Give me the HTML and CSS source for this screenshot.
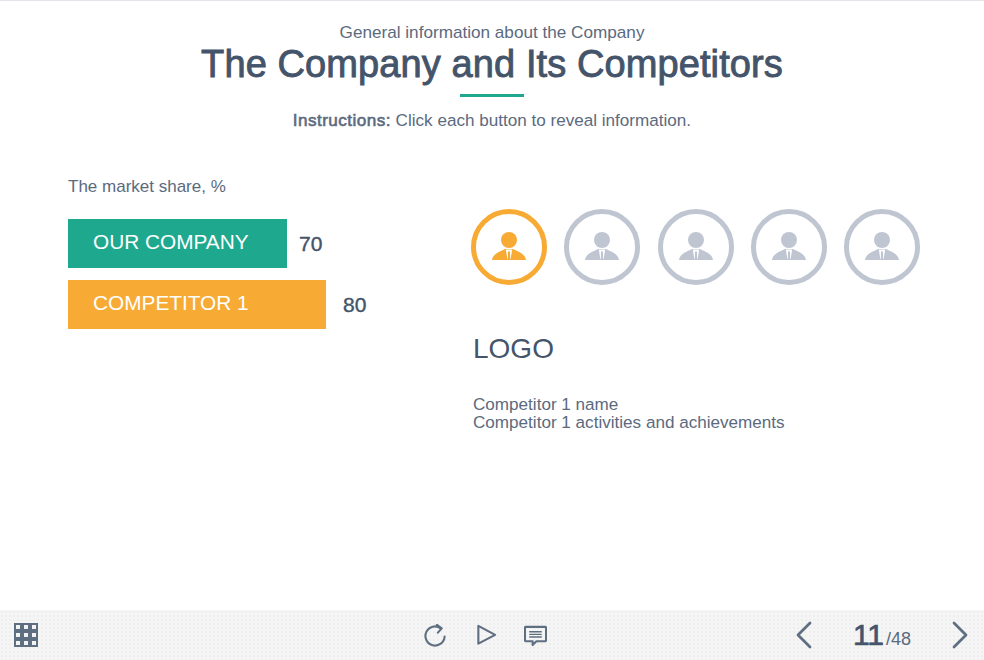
FILE: index.html
```html
<!DOCTYPE html>
<html lang="en">
<head>
  <meta charset="UTF-8" />
  <title>The Company and Its Competitors</title>
  <link rel="stylesheet" href="styles.css">
</head>
<body>
  <div class="slide">
    <header class="slide-head">
      <p class="subtitle">General information about the Company</p>
      <h1>The Company and Its Competitors</h1>
      <div class="rule"></div>
      <p class="instructions"><b>Instructions:</b> Click each button to reveal information.</p>
    </header>

    <main class="content">
      <!-- Market share bars -->
      <section class="share">
        <p class="share-title">The market share, %</p>
        <div class="bar-row">
          <div class="bar bar-green">OUR COMPANY</div>
          <span class="bar-value">70</span>
        </div>
        <div class="bar-row">
          <div class="bar bar-orange">COMPETITOR 1</div>
          <span class="bar-value value-wide">80</span>
        </div>
      </section>

      <!-- Competitor buttons -->
      <section class="details">
        <div class="people">
          <button class="person active"><svg viewBox="0 0 34 28"><use href="#man"/></svg></button>
          <button class="person"><svg viewBox="0 0 34 28"><use href="#man"/></svg></button>
          <button class="person"><svg viewBox="0 0 34 28"><use href="#man"/></svg></button>
          <button class="person"><svg viewBox="0 0 34 28"><use href="#man"/></svg></button>
          <button class="person"><svg viewBox="0 0 34 28"><use href="#man"/></svg></button>
        </div>
        <h2 class="logo">LOGO</h2>
        <p class="info">Competitor 1 name<br>Competitor 1 activities and achievements</p>
      </section>
    </main>

    <footer class="toolbar">
      <div class="tool-left">
        <svg class="icon-grid" viewBox="0 0 24 24"><use href="#grid"/></svg>
      </div>
      <div class="tool-mid">
        <svg class="icon icon-reload" viewBox="0 0 24 24">
          <path d="M17.5 4.5 A10 10 0 1 0 21.5 13"/>
          <path d="M13.5 1 L18.5 4.6 L14.5 9"/>
        </svg>
        <svg class="icon" viewBox="0 0 24 24"><path d="M3.5 2 V20.5 L21 11.3 Z"/></svg>
        <svg class="icon" viewBox="0 0 24 24">
          <path d="M2 3 H22 Q23 3 23 4 V17 Q23 18 22 18 H13 L9 22 V18 H2 Q1 18 1 17 V4 Q1 3 2 3 Z"/>
          <path d="M6 8 H18 M6 10.8 H18 M6 13.6 H18" class="thin"/>
        </svg>
      </div>
      <div class="tool-right">
        <svg class="arrow" viewBox="0 0 18 28"><path d="M15 2 L3 14 L15 26"/></svg>
        <div class="pager"><b>11</b>/48</div>
        <svg class="arrow" viewBox="0 0 18 28"><path d="M3 2 L15 14 L3 26"/></svg>
      </div>
    </footer>
  </div>

  <svg class="defs" width="0" height="0">
    <defs>
      <symbol id="man" viewBox="0 0 34 28">
        <circle cx="17" cy="8" r="8" fill="currentColor"/>
        <path d="M0 28 C1 22 6 20.5 13 17 H21 C28 20.5 33 22 34 28 Z" fill="currentColor"/>
        <path d="M13.8 17.6 H20.2 L18.6 27 H15.4 Z" fill="#fff"/>
        <path d="M16 19.5 H18 L18.2 28 H15.8 Z" fill="currentColor"/>
      </symbol>
      <symbol id="grid" viewBox="0 0 24 24">
        <g fill="none" stroke="#5f6f82" stroke-width="2">
          <rect x="1" y="1" width="6" height="6"/><rect x="9" y="1" width="6" height="6"/><rect x="17" y="1" width="6" height="6"/>
          <rect x="1" y="9" width="6" height="6"/><rect x="9" y="9" width="6" height="6"/><rect x="17" y="9" width="6" height="6"/>
          <rect x="1" y="17" width="6" height="6"/><rect x="9" y="17" width="6" height="6"/><rect x="17" y="17" width="6" height="6"/>
        </g>
      </symbol>
    </defs>
  </svg>
</body>
</html>
```

FILE: styles.css
```css
html, body {
  height: 100%;
  margin: 0;
  padding: 0;
  font-family: "Liberation Sans", Arial, sans-serif;
  color: #44546a;
  background-color: #fff;
}

.slide {
  display: flex;
  flex-direction: column;
  height: 660px;
  box-sizing: border-box;
  border-top: 1px solid #e3e6ea;
  overflow: hidden;
}

.slide-head {
  text-align: center;
  padding-top: 22px;
}

.subtitle {
  margin: 0;
  font-size: 17.15px;
  line-height: 18px;
  color: #5b6a7e;
}

h1 {
  margin: 1px 0 0;
  font-size: 38px;
  line-height: 44px;
  font-weight: normal;
  letter-spacing: 0.1px;
  color: #44546a;
  -webkit-text-stroke: 0.9px #44546a;
}

.rule {
  width: 64px;
  height: 3px;
  margin: 8px auto 0;
  background-color: #1ea98f;
}

.instructions {
  margin: 14px 0 0;
  font-size: 17.1px;
  line-height: 20px;
  color: #5b6a7e;
}

.instructions b {
  font-weight: normal;
  letter-spacing: 0.45px;
  -webkit-text-stroke: 0.6px #5b6a7e;
}

.content {
  display: flex;
  flex: 1;
  padding: 0 64px 0 68px;
}

.share {
  width: 403px;
  padding-top: 47px;
}

.share-title {
  margin: 0 0 23px;
  font-size: 17px;
  line-height: 18px;
  color: #5b6a7e;
}

.bar-row {
  display: flex;
  align-items: center;
  margin-bottom: 12px;
}

.bar {
  height: 49px;
  line-height: 45px;
  padding-left: 25px;
  box-sizing: border-box;
  font-size: 20.8px;
  color: #fff;
}

.bar-green {
  width: 219px;
  background-color: #1ea98f;
}

.bar-orange {
  width: 258px;
  background-color: #f7ab35;
}

.bar-value {
  margin-left: 12px;
  font-size: 21px;
  color: #44546a;
  -webkit-text-stroke: 0.4px #44546a;
}

.value-wide {
  margin-left: 17px;
}

.details {
  flex: 1;
  padding-top: 78px;
}

.people {
  display: flex;
  gap: 17.25px;
}

.person {
  display: flex;
  align-items: center;
  justify-content: center;
  width: 76px;
  height: 76px;
  padding: 0 0 2px;
  border: 5px solid #bfc6d1;
  border-radius: 50%;
  box-sizing: border-box;
  background: none;
  color: #bfc6d1;
  cursor: pointer;
}

.person.active {
  border-color: #f7ab35;
  color: #f7ab35;
}

.person svg {
  width: 34px;
  height: 28px;
}

.logo {
  margin: 47px 0 0 2px;
  font-size: 28px;
  line-height: 34px;
  font-weight: normal;
  color: #44546a;
}

.info {
  margin: 30px 0 0 2px;
  font-size: 17.1px;
  line-height: 17.5px;
  color: #5b6a7e;
}

.toolbar {
  display: grid;
  grid-template-columns: 1fr auto 1fr;
  align-items: center;
  height: 50px;
  flex-shrink: 0;
  background-color: #f5f5f5;
  background-image: radial-gradient(#eeeeee 0.7px, transparent 0.8px);
  background-size: 4px 4px;
}

.tool-left {
  padding-left: 14px;
  display: flex;
}

.icon-grid {
  width: 24px;
  height: 24px;
}

.tool-mid {
  display: flex;
  gap: 26px;
  align-items: center;
  padding-right: 14px;
}

.icon {
  width: 23px;
  height: 23px;
  fill: none;
  stroke: #5f6f82;
  stroke-width: 2.2;
  stroke-linejoin: round;
  stroke-linecap: round;
}

.icon-reload {
  margin-right: 2px;
}

.icon .thin {
  stroke-width: 1.5;
}

.tool-right {
  display: flex;
  justify-content: flex-end;
  align-items: center;
  padding-right: 15px;
}

.arrow {
  width: 18px;
  height: 28px;
  fill: none;
  stroke: #5f6f82;
  stroke-width: 2.8;
  stroke-linecap: round;
  stroke-linejoin: round;
}

.pager {
  width: 138px;
  text-align: center;
  font-size: 18px;
  color: #5b6a7e;
}

.pager b {
  margin-right: 2px;
  font-size: 30px;
  font-weight: normal;
  color: #44546a;
  -webkit-text-stroke: 0.7px #44546a;
}

.defs {
  position: absolute;
}
```
